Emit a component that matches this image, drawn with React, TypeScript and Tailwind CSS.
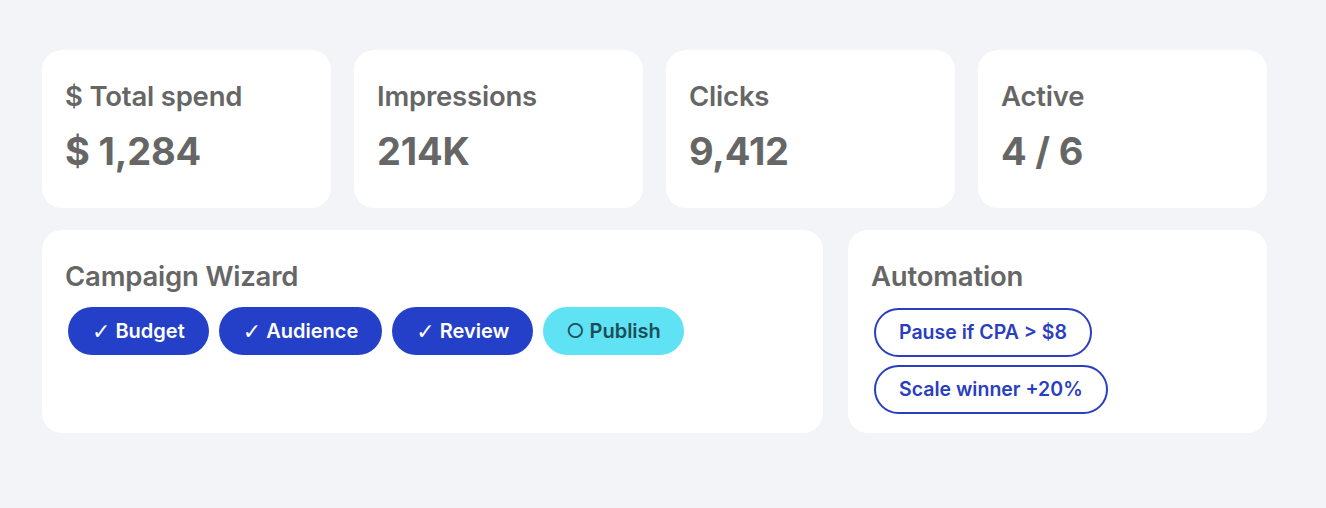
import React from 'react';

const stats = [
  { label: '$ Total spend', value: '$ 1,284' },
  { label: 'Impressions', value: '214K' },
  { label: 'Clicks', value: '9,412' },
  { label: 'Active', value: '4 / 6' },
];

const steps = [
  { name: 'Budget', done: true },
  { name: 'Audience', done: true },
  { name: 'Review', done: true },
  { name: 'Publish', done: false },
];

const rules = ['Pause if CPA > $8', 'Scale winner +20%'];

const StatCard = ({ label, value }: { label: string; value: string }) => (
  <div className="bg-white rounded-[20px] h-[158px] px-[23px] pt-[29px]">
    <div className="text-[27.5px] leading-[34px] font-semibold text-[#666] tracking-[-0.2px]">{label}</div>
    <div className="mt-[15px] text-[38px] leading-[46px] font-bold text-[#666] tracking-[-0.2px]">{value}</div>
  </div>
);

export default function App() {
  return (
    <div
      className="min-h-screen bg-[#f3f4f8] pt-[50px] pl-[42px]"
      style={{ fontFamily: 'Inter, "Noto Sans", sans-serif' }}
    >
      <div className="w-[1225px] flex flex-col gap-[22px]">
        <div className="grid grid-cols-4 gap-[23px]">
          {stats.map((s) => (
            <StatCard key={s.label} label={s.label} value={s.value} />
          ))}
        </div>

        <div className="flex gap-[25px]">
          {/* wizard progress */}
          <div className="w-[781px] h-[203px] bg-white rounded-[20px] px-[23px] pt-[29px]">
            <h3 className="text-[27.5px] leading-[34px] font-semibold text-[#666] tracking-[-0.2px]">Campaign Wizard</h3>
            <div className="mt-[14px] ml-[3px] flex gap-[10px]">
              {steps.map((st) =>
                st.done ? (
                  <span
                    key={st.name}
                    className="h-[48px] px-[24px] rounded-full bg-[#2540c8] text-white text-[20px] font-semibold flex items-center gap-[5px]"
                  >
                    <span className="font-normal text-[22px]" style={{ fontFamily: '"DejaVu Sans", sans-serif' }}>✓</span>
                    {st.name}
                  </span>
                ) : (
                  <span
                    key={st.name}
                    className="h-[48px] px-[23px] rounded-full bg-[#5fe3f4] text-[#1d4e57] text-[20px] font-semibold flex items-center gap-[5px]"
                  >
                    <span className="font-normal">○</span>
                    {st.name}
                  </span>
                )
              )}
            </div>
          </div>

          {/* automation rules */}
          <div className="flex-1 h-[203px] bg-white rounded-[20px] px-[23px] pt-[29px]">
            <h3 className="text-[27.5px] leading-[34px] font-semibold text-[#666] tracking-[-0.2px]">Automation</h3>
            <div className="mt-[15px] ml-[3px] flex flex-col items-start gap-[8px]">
              {rules.map((r) => (
                <span
                  key={r}
                  className="h-[49px] px-[23px] rounded-full border-2 border-[#2a3fc0] text-[#2a3fc0] text-[19.5px] font-semibold flex items-center"
                >
                  {r}
                </span>
              ))}
            </div>
          </div>
        </div>
      </div>
    </div>
  );
}
